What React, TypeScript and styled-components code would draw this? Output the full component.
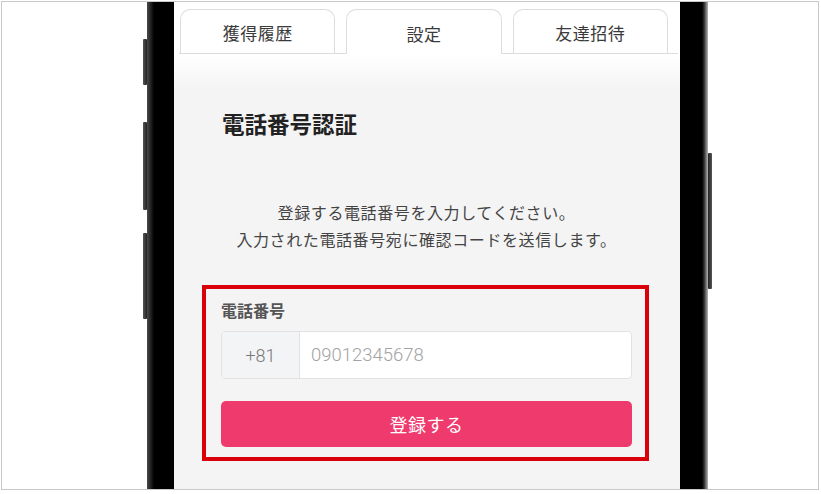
import React from "react";
import styled, { createGlobalStyle } from "styled-components";

const GlobalStyle = createGlobalStyle`
  html, body {
    margin: 0;
    padding: 0;
    background: #ffffff;
  }
  body {
    font-family: "Noto Sans CJK JP", "Noto Sans", sans-serif;
    color: #333;
  }
`;

const Frame = styled.div`
  box-sizing: border-box;
  margin: 1px 0 0 1px;
  width: 818px;
  height: 489px;
  border: 1px solid #c9c9c9;
  overflow: hidden;
  display: flex;
  padding-left: 145px;
  background: #ffffff;
`;

const Phone = styled.div`
  position: relative;
  flex: none;
  width: 561px;
  height: 620px;
  padding: 0 28px 0 27px;
  box-sizing: border-box;
  background: linear-gradient(
    90deg,
    #4a4a4a 0,
    #151515 5px,
    #000 7px,
    #000 calc(100% - 6px),
    #2a2a2a calc(100% - 4px),
    #b5b5b5 100%
  );
`;

const SideKey = styled.span<{ $side: "left" | "right"; $top: number; $h: number }>`
  position: absolute;
  top: ${(p) => p.$top}px;
  ${(p) => (p.$side === "left" ? "left: -4px;" : "right: -4px;")}
  width: 4px;
  height: ${(p) => p.$h}px;
  border-radius: 1px;
  background: ${(p) =>
    p.$side === "left"
      ? "linear-gradient(90deg, #555, #222)"
      : "linear-gradient(90deg, #222, #555)"};
`;

const Screen = styled.div`
  height: 100%;
  background: #ffffff;
  display: flex;
  flex-direction: column;
`;

const TabBar = styled.div`
  display: flex;
  gap: 11px;
  margin: 7px 2px 0 5px;
  padding: 0 10px 0 1px;
  border-bottom: 1px solid #dcdcdc;
`;

const Tab = styled.div<{ $active?: boolean }>`
  flex: 1;
  box-sizing: border-box;
  height: ${(p) => (p.$active ? 45 : 44)}px;
  margin-bottom: ${(p) => (p.$active ? -1 : 0)}px;
  display: flex;
  align-items: center;
  justify-content: center;
  padding-top: 2px;
  border: 1px solid #dcdcdc;
  border-bottom: none;
  border-radius: 10px 10px 0 0;
  background: #ffffff;
  font-size: 17px;
  color: #3a3a3a;
  letter-spacing: 0.5px;
`;

const Body = styled.div`
  flex: 1;
  padding: 54px 48px 0 47px;
  background: linear-gradient(180deg, #ffffff 0, #f4f4f4 36px, #f4f4f4 100%);
`;

const Title = styled.h1`
  margin: 0;
  padding-left: 1px;
  font-size: 22.5px;
  line-height: 31px;
  font-weight: 700;
  color: #222;
`;

const Lead = styled.p`
  margin: 60px 0 0;
  font-size: 16px;
  line-height: 27px;
  letter-spacing: 0.6px;
  text-align: center;
  color: #444;
`;

const Highlight = styled.div`
  margin: 32px -17px 0 -19px;
  padding: 10px 13px 10px 15px;
  border: 4px solid #d9000a;
`;

const FieldLabel = styled.div`
  font-size: 16px;
  line-height: 22px;
  font-weight: 700;
  color: #555;
`;

const PhoneInput = styled.div`
  margin-top: 10px;
  height: 48px;
  box-sizing: border-box;
  display: flex;
  border: 1px solid #e2e2e2;
  border-radius: 4px;
  overflow: hidden;
  background: #ffffff;
`;

const Prefix = styled.div`
  flex: none;
  width: 77px;
  display: flex;
  align-items: center;
  justify-content: center;
  background: #f3f4f6;
  border-right: 1px solid #e2e2e2;
  font-family: Roboto, "Noto Sans", sans-serif;
  font-size: 18px;
  font-weight: 300;
  color: #777;
`;

const NumberField = styled.input`
  flex: 1;
  min-width: 0;
  border: none;
  outline: none;
  padding: 0 11px;
  background: transparent;
  font-family: Roboto, "Noto Sans", sans-serif;
  font-size: 18.5px;
  font-weight: 300;
  color: #333;

  &::placeholder {
    color: #a3a3a3;
  }
`;

const SubmitButton = styled.button`
  display: block;
  width: 100%;
  margin-top: 22px;
  height: 46px;
  border: none;
  border-radius: 5px;
  background: #ef3a6d;
  color: #ffffff;
  font-family: "Noto Sans CJK JP", sans-serif;
  font-size: 18px;
  font-weight: 400;
  letter-spacing: 0.5px;
  cursor: pointer;
`;

const tabs = [
  { label: "獲得履歴", active: false },
  { label: "設定", active: true },
  { label: "友達招待", active: false },
];

export default function App() {
  return (
    <>
      <GlobalStyle />
      <Frame>
        <Phone>
          <SideKey $side="left" $top={37} $h={46} />
          <SideKey $side="left" $top={120} $h={88} />
          <SideKey $side="left" $top={231} $h={86} />
          <SideKey $side="right" $top={151} $h={136} />
          <Screen>
            <TabBar>
              {tabs.map((t) => (
                <Tab key={t.label} $active={t.active}>
                  {t.label}
                </Tab>
              ))}
            </TabBar>
            <Body>
              <Title>電話番号認証</Title>
              <Lead>
                登録する電話番号を入力してください。
                <br />
                入力された電話番号宛に確認コードを送信します。
              </Lead>
              <Highlight>
                <FieldLabel>電話番号</FieldLabel>
                <PhoneInput>
                  <Prefix>+81</Prefix>
                  <NumberField type="tel" placeholder="09012345678" />
                </PhoneInput>
                <SubmitButton type="button">登録する</SubmitButton>
              </Highlight>
            </Body>
          </Screen>
        </Phone>
      </Frame>
    </>
  );
}
